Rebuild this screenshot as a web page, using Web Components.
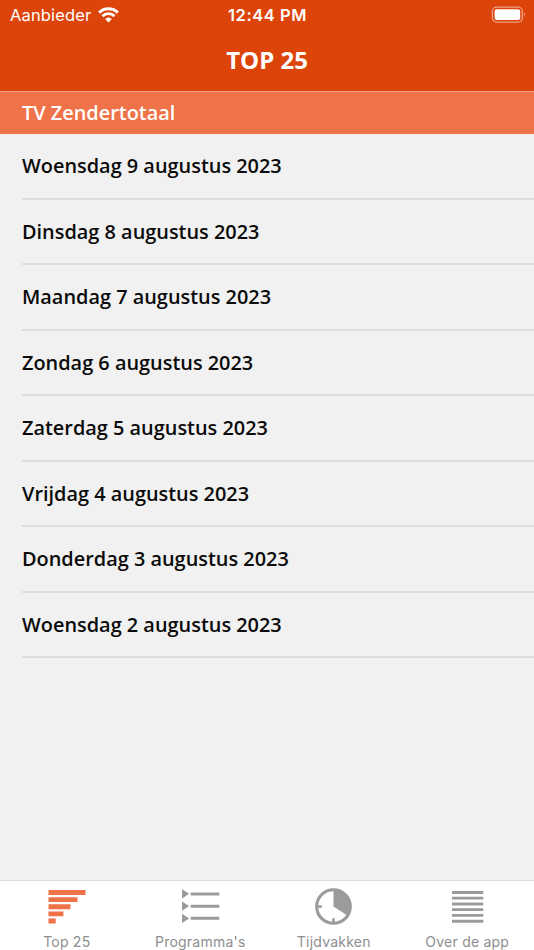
<!DOCTYPE html>
<html lang="nl">
<head>
<meta charset="utf-8">
<title>Top 25</title>
<style>
    html, body { margin: 0; height: 100%; overflow: hidden; }
    body { font-family: "Open Sans", sans-serif; background: #f1f1f1; }
</style>
</head>
<body>
<top-app></top-app>
<script>
const DAYS = [
    'Woensdag 9 augustus 2023',
    'Dinsdag 8 augustus 2023',
    'Maandag 7 augustus 2023',
    'Zondag 6 augustus 2023',
    'Zaterdag 5 augustus 2023',
    'Vrijdag 4 augustus 2023',
    'Donderdag 3 augustus 2023',
    'Woensdag 2 augustus 2023',
];

const ICONS = {
    top: `<path d="M1.5 2h37v5h-37zM1.5 9.2h29v4.9h-29zM1.5 16.3h22v4.9h-22zM1.5 23.5h14.9v4.8H1.5zM1.5 30.5h7.2v5H1.5z"/>`,
    programs: `<path d="M1 1.2l7.2 4.6L1 10.4zM1 13.5l7.2 4.6L1 22.7zM1 25.8l7.2 4.6L1 35z"/>
        <path d="M9.7 4.4h28.6v3H9.7zM9.7 16.7h28.6v3H9.7zM9.7 28.8h28.6v3H9.7z"/>`,
    clock: `<circle cx="19.5" cy="18.5" r="16.8" fill="none" stroke="currentColor" stroke-width="3.1"/>
        <path d="M19.5 18.5V1.5a17 17 0 0 1 14.3 26.2z"/>
        <path d="M3 17.2h4.8v2.6H3zM18.2 30.3h2.6v5h-2.6z"/>`,
    lines: `<path d="M4 3h31.3v2.9H4zM4 8.8h31.3v2.8H4zM4 14.6h31.3v2.8H4zM4 20.3h31.3v2.8H4zM4 26h31.3v2.8H4zM4 31.7h31.3v3H4z"/>`,
};

class StatusBar extends HTMLElement {
    constructor() {
        super();
        this.attachShadow({ mode: 'open' });
        this.shadowRoot.innerHTML = `
        <style>
            :host {
                display: grid;
                grid-template-columns: 1fr auto 1fr;
                align-items: center;
                box-sizing: border-box;
                height: 30px;
                padding: 0 8px 0 10px;
                font: 400 16.5px/30px Inter, sans-serif;
            }
            .carrier { display: flex; align-items: center; gap: 7px; letter-spacing: .15px; }
            .time { margin-right: 1px; font-weight: 560; letter-spacing: .55px; }
            .battery { justify-self: end; }
            svg { display: block; }
        </style>
        <div class="carrier">
            <span>Aanbieder</span>
            <svg width="21" height="16" viewBox="0 0 21 16" fill="none" stroke="#fff" stroke-width="2.9">
                <path d="M1.1 5.6a13.4 13.4 0 0 1 18.8 0M4.5 9.1a8.6 8.6 0 0 1 12 0"/>
                <path d="M10.5 15.4l-3.3-3.4a4.8 4.8 0 0 1 6.6 0z" fill="#fff" stroke="none"/>
            </svg>
        </div>
        <span class="time">12:44 PM</span>
        <svg class="battery" width="35" height="18" viewBox="0 0 35 18">
            <rect x="1.4" y="1.1" width="30" height="15" rx="4.3" fill="none" stroke="#fff" stroke-opacity=".5" stroke-width="1.3"/>
            <rect x="3.6" y="3.3" width="25.6" height="10.6" rx="2.2" fill="#fff"/>
            <path d="M33 6.1q1.9 2.5 0 5z" fill="#fff" fill-opacity=".5"/>
        </svg>`;
    }
}

class NavHeader extends HTMLElement {
    constructor() {
        super();
        this.attachShadow({ mode: 'open' });
        this.shadowRoot.innerHTML = `
        <style>
            :host { display: block; height: 91px; background: #dd440a; color: #fff; }
            h1 {
                margin: 0;
                text-align: center;
                font-size: 24px;
                font-weight: 700;
                line-height: 59px;
            }
        </style>
        <status-bar></status-bar>
        <h1><slot></slot></h1>`;
    }
}

class SectionTitle extends HTMLElement {
    constructor() {
        super();
        this.attachShadow({ mode: 'open' });
        this.shadowRoot.innerHTML = `
        <style>
            :host {
                display: block;
                box-sizing: border-box;
                height: 43px;
                padding-left: 22px;
                border-top: 1px solid #e4a083;
                background: #ef7248;
                color: #fff;
                font-size: 19.9px;
                font-weight: 560;
                line-height: 42px;
            }
        </style>
        <slot></slot>`;
    }
}

class DayRow extends HTMLElement {
    constructor() {
        super();
        this.attachShadow({ mode: 'open' });
        this.shadowRoot.innerHTML = `
        <style>
            :host {
                display: block;
                box-sizing: border-box;
                height: 65.5px;
                margin-left: 22px;
                border-bottom: 2px solid #d9dedc;
                color: #0b0b0b;
                font-size: 19.9px;
                font-weight: 560;
                line-height: 64.5px;
                white-space: nowrap;
            }
        </style>
        <slot></slot>`;
    }
}

class TabItem extends HTMLElement {
    constructor() {
        super();
        this.attachShadow({ mode: 'open' });
    }

    connectedCallback() {
        this.shadowRoot.innerHTML = `
        <style>
            :host {
                display: flex;
                flex-direction: column;
                align-items: center;
                flex: 1;
                padding-top: 7px;
                color: #9b9b9b;
            }
            :host([active]) { color: #ef7248; }
            svg { display: block; flex: none; fill: currentColor; }
            .label {
                margin-top: 4px;
                color: #8e8e8e;
                font: 400 14px/23px Inter, sans-serif;
                letter-spacing: .22px;
                white-space: nowrap;
            }
        </style>
        <svg width="39" height="38" viewBox="0 0 39 38">${ICONS[this.getAttribute('icon')]}</svg>
        <span class="label"><slot></slot></span>`;
    }
}

class TabBar extends HTMLElement {
    constructor() {
        super();
        this.attachShadow({ mode: 'open' });
        this.shadowRoot.innerHTML = `
        <style>
            :host {
                display: flex;
                box-sizing: border-box;
                height: 70px;
                border-top: 1px solid #dcdcdc;
                background: #fff;
            }
        </style>
        <slot></slot>`;
    }
}

class TopApp extends HTMLElement {
    constructor() {
        super();
        this.attachShadow({ mode: 'open' });
        this.shadowRoot.innerHTML = `
        <style>
            :host { display: flex; flex-direction: column; height: 100vh; background: #f1f1f1; }
            main { flex: 1; min-height: 0; }
        </style>
        <nav-header>TOP 25</nav-header>
        <section-title>TV Zendertotaal</section-title>
        <main>${DAYS.map((day) => `<day-row>${day}</day-row>`).join('')}</main>
        <tab-bar>
            <tab-item icon="top" active>Top 25</tab-item>
            <tab-item icon="programs">Programma's</tab-item>
            <tab-item icon="clock">Tijdvakken</tab-item>
            <tab-item icon="lines">Over de app</tab-item>
        </tab-bar>`;
    }
}

customElements.define('status-bar', StatusBar);
customElements.define('nav-header', NavHeader);
customElements.define('section-title', SectionTitle);
customElements.define('day-row', DayRow);
customElements.define('tab-item', TabItem);
customElements.define('tab-bar', TabBar);
customElements.define('top-app', TopApp);
</script>
</body>
</html>
